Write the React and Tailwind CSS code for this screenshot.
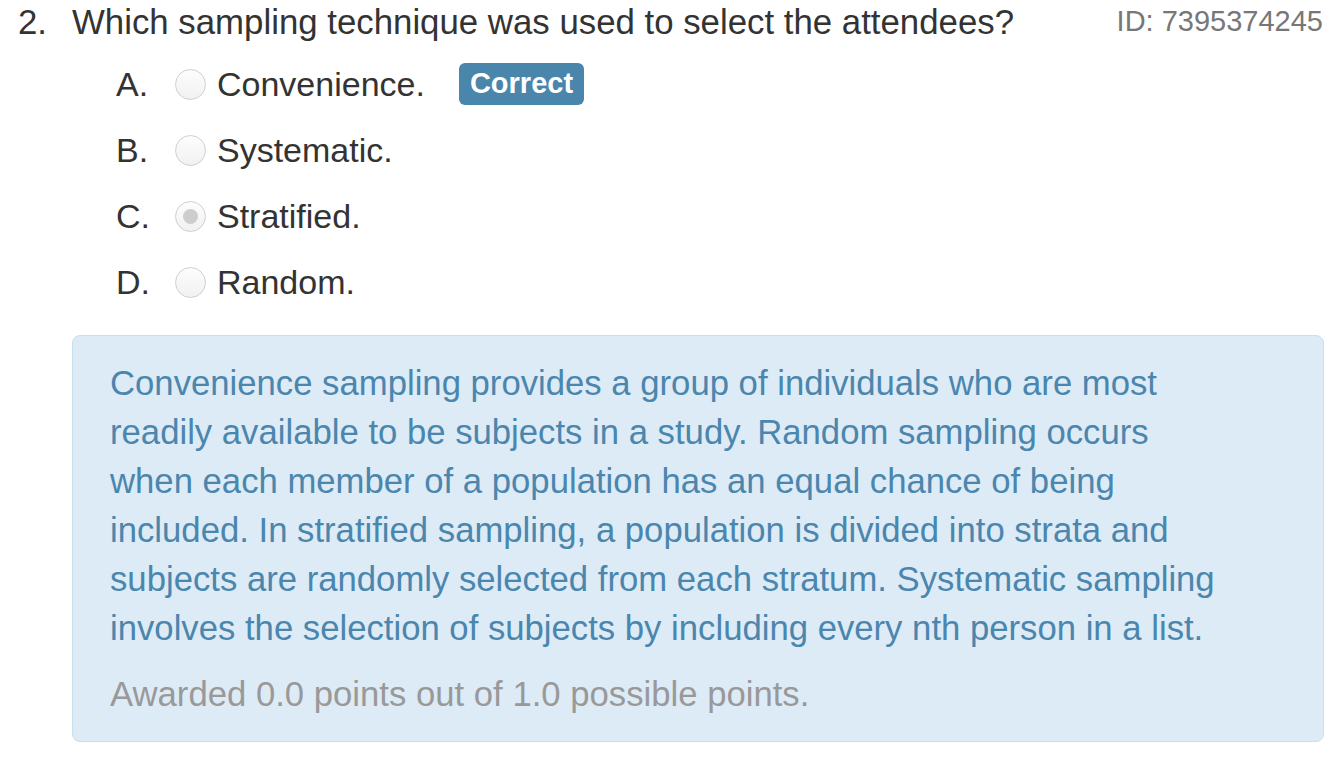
import React from "react";

const options = [
  { letter: "A.", text: "Convenience.", correct: true },
  { letter: "B.", text: "Systematic." },
  { letter: "C.", text: "Stratified.", selected: true },
  { letter: "D.", text: "Random." },
];

const Radio = ({ selected }) => (
  <span className="flex h-[31px] w-[31px] items-center justify-center rounded-full border border-[#cfcfcf] bg-gradient-to-b from-[#fdfdfd] to-[#f1f1f1]">
    {selected && <span className="h-[15px] w-[15px] rounded-full bg-[#cdcdcd]" />}
  </span>
);

const App = () => {
  return (
    <div className="min-h-screen w-full bg-white font-['Liberation_Sans',Arial,sans-serif] text-[#333]">
      <div className="flex h-[44px] items-center justify-between pl-[18px] pr-[11px]">
        <div className="flex items-center text-[34.8px] leading-[44px]">
          <span className="w-[54px]">2.</span>
          <span>Which sampling technique was used to select the attendees?</span>
        </div>
        <span className="text-[29px] text-[#777]">ID: 7395374245</span>
      </div>

      <div className="mt-[7px] flex flex-col">
        {options.map((o) => (
          <div key={o.letter} className="flex h-[66px] items-center pl-[116px] text-[34px]">
            <span className="w-[59px]">{o.letter}</span>
            <Radio selected={o.selected} />
            <span className="ml-[11px]">{o.text}</span>
            {o.correct && (
              <span className="ml-[34px] flex h-[42px] items-center rounded-[6px] bg-[#4a86ab] px-[11px] text-[29px] font-bold text-white">
                Correct
              </span>
            )}
          </div>
        ))}
      </div>

      <div className="ml-[72px] mr-[10px] mt-[20px] rounded-[8px] border border-[#c3e2ee] bg-[#ddebf6] pb-[22px] pl-[37px] pr-[95px] pt-[23px] text-[34.7px] leading-[49px]">
        <p className="text-[#4a86ad]">
          Convenience sampling provides a group of individuals who are most readily available to be subjects in a study. Random sampling occurs when each member of a population has an equal chance of being included. In stratified sampling, a population is divided into strata and subjects are randomly selected from each stratum. Systematic sampling involves the selection of subjects by including every nth person in a list.
        </p>
        <p className="mt-[17px] text-[#999]">Awarded 0.0 points out of 1.0 possible points.</p>
      </div>
    </div>
  );
};

export default App;
